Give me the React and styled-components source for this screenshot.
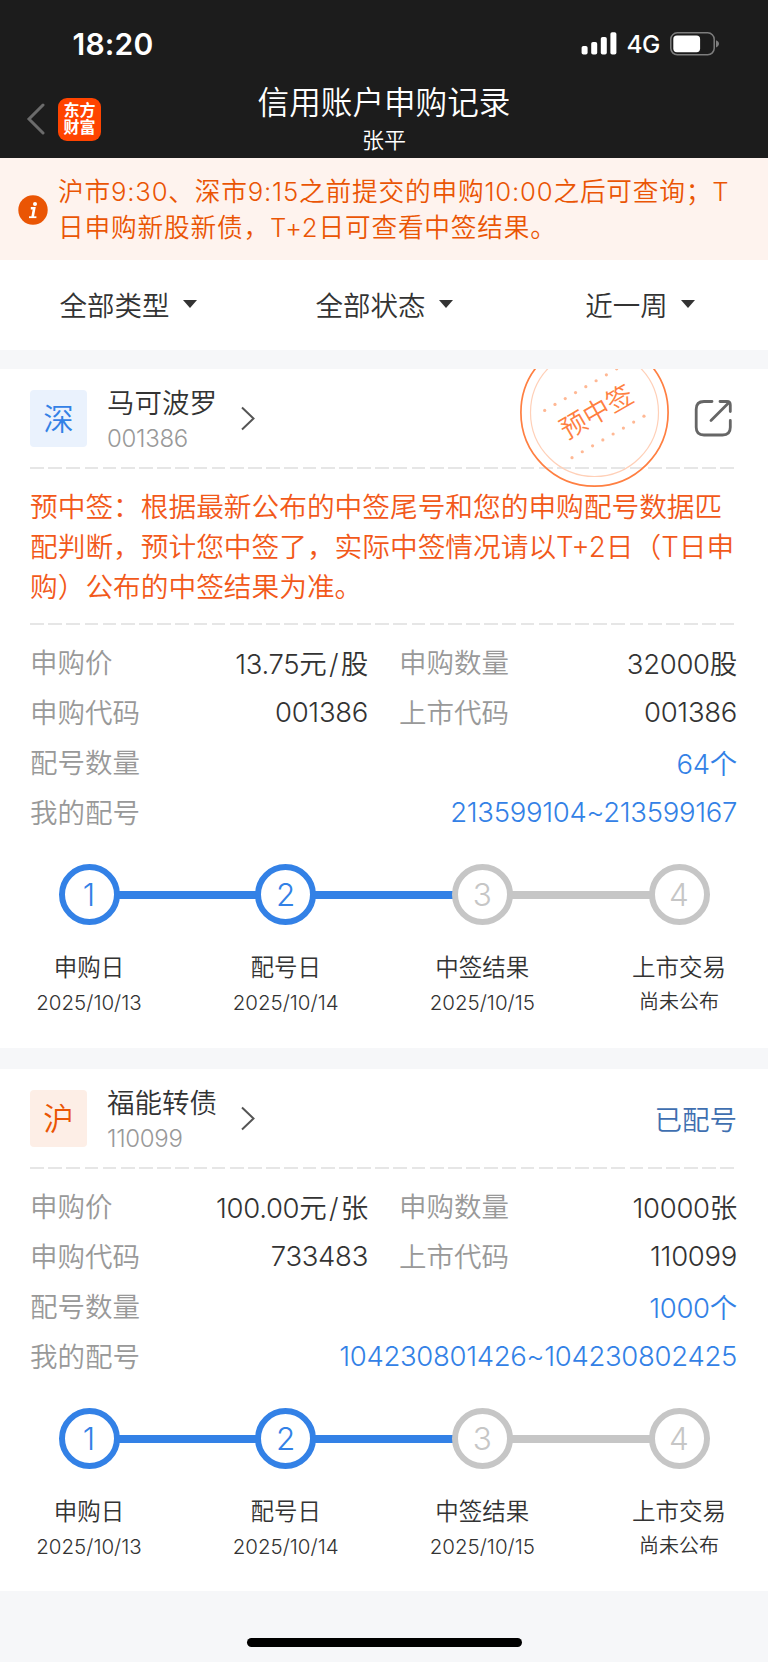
import React from 'react'
import styled, { createGlobalStyle } from 'styled-components'

const GlobalStyle = createGlobalStyle`
    body {
        margin: 0;
        background: #f6f7f9;
    }

    * {
        box-sizing: border-box;
    }
`;

const Page = styled.div`
    display: flex;
    flex-direction: column;
    width: 768px;
    height: 1662px;
    overflow: hidden;
    background: #f6f7f9;
    color: #333;
    font-family: Inter, "Noto Sans CJK SC", sans-serif;
    font-size: 27.5px;
    font-weight: 350;
    white-space: nowrap;
`;

const Header = styled.header`
    height: 158px;
    flex: none;
    background: #1c1c1c;
    color: #fff;
`;

const StatusBar = styled.div`
    display: flex;
    align-items: center;
    justify-content: space-between;
    height: 87px;
    padding: 0 49px 0 72.5px;
`;

const Clock = styled.span`
    font-size: 30px;
    font-weight: 600;
    letter-spacing: 0.2px;
`;

const Signals = styled.div`
    display: flex;
    align-items: center;

    span {
        margin: 0 10px 0 9px;
        font-size: 24.5px;
        font-weight: 450;
        letter-spacing: -0.4px;
    }
`;

const NavBar = styled.div`
    display: grid;
    grid-template-columns: 200px 1fr 200px;
    height: 71px;
`;

const NavLeft = styled.div`
    display: flex;
    align-items: center;
    gap: 13px;
    height: 64px;
    padding-left: 26px;
`;

const Logo = styled.div`
    width: 43px;
    height: 43px;
    padding-top: 4px;
    border-radius: 9px;
    background: #ff4400;
    font-size: 16px;
    font-weight: 700;
    line-height: 17.7px;
    text-align: center;
`;

const Title = styled.div`
    text-align: center;

    h1 {
        margin: 0;
        font-size: 31.6px;
        font-weight: 350;
        line-height: 32px;
    }

    p {
        margin: 8px 0 0;
        font-size: 22px;
        line-height: 26px;
    }
`;

const Banner = styled.div`
    display: flex;
    align-items: center;
    flex: none;
    height: 102px;
    padding: 1px 0 0 18px;
    background: #fef3ee;
    color: #ea5504;
    font-size: 25.7px;
    line-height: 36px;
    letter-spacing: 0.8px;

    p {
        margin: 0 0 0 10px;
    }
`;

const Filters = styled.div`
    display: flex;
    flex: none;
    height: 90px;
    padding-bottom: 2px;
    background: #fff;
`;

const Filter = styled.div`
    display: flex;
    flex: 1;
    align-items: center;
    justify-content: center;
    gap: 13px;
`;

const Card = styled.section`
    position: relative;
    flex: none;
    height: ${props => props.$height}px;
    margin-top: ${props => props.$gap}px;
    padding: 0 30px;
    overflow: hidden;
    background: #fff;
`;

const CardHead = styled.div`
    display: flex;
    align-items: center;
    height: 98px;
`;

const Market = styled.div`
    width: 57px;
    height: 57px;
    border-radius: 4px;
    background: ${props => props.$bg};
    color: ${props => props.$color};
    font-size: 30.5px;
    line-height: 57px;
    text-align: center;
`;

const Stock = styled.div`
    margin: 0 24px 0 20px;
    padding-top: 4px;

    h2 {
        margin: 0;
        font-size: 27.5px;
        font-weight: 350;
        line-height: 36px;
    }

    p {
        margin: 0;
        color: #999;
        font-size: 24px;
        line-height: 35px;
        letter-spacing: -0.3px;
    }
`;

const HeadRight = styled.div`
    display: flex;
    margin-left: auto;
    margin-right: 5px;
`;

const Allotted = styled.span`
    margin-right: -4px;
    color: #3f6fb0;
`;

const Stamp = styled.svg`
    position: absolute;
    top: -32px;
    left: 519px;
`;

const Dash = styled.div`
    width: 705px;
    height: 2px;
    background: repeating-linear-gradient(90deg, #e6e6e6 0 13.8px, transparent 13.8px 18.17px);
`;

const Notice = styled.p`
    margin: 0;
    padding: 18px 0;
    height: 154px;
    color: #f2591a;
    font-size: 27.7px;
    line-height: 40px;
`;

const Fields = styled.div`
    display: grid;
    grid-template-columns: 338px 338px;
    column-gap: 31px;
    grid-auto-rows: 50px;
    margin-right: -6px;
    padding-top: 12px;
`;

const Field = styled.div`
    display: flex;
    align-items: center;
    justify-content: space-between;
    grid-column: ${props => (props.$wide ? 'span 2' : 'auto')};
    color: ${props => (props.$wide ? '#3381e6' : '#333')};
    letter-spacing: -0.3px;

    label {
        padding-bottom: 2px;
        color: #999;
        letter-spacing: 0;
    }
`;

const Slash = styled.i`
    padding: 0 2.5px;
    font-style: normal;
`;

const Track = styled.div`
    display: flex;
    align-items: center;
    margin-top: 27px;
    padding: 0 28.5px;
`;

const Circle = styled.div`
    flex: none;
    width: 61px;
    height: 61px;
    border: 6px solid ${props => (props.$done ? '#3381e6' : '#c6c6c6')};
    border-radius: 50%;
    color: ${props => (props.$done ? '#3381e6' : '#c6c6c6')};
    font-size: 31.5px;
    font-weight: 300;
    line-height: 49px;
    text-align: center;
`;

const Connector = styled.div`
    flex: 1;
    height: 8px;
    margin: 0 -1px;
    background: ${props => (props.$done ? '#3381e6' : '#c6c6c6')};
`;

const Captions = styled.div`
    display: flex;
    justify-content: space-between;
    margin-top: 25px;
`;

const Caption = styled.div`
    width: 118px;
    text-align: center;
    font-size: 23.5px;
    line-height: 35px;

    small {
        display: block;
        font-size: ${props => (props.$pending ? 20 : 20.5)}px;
    }
`;

const HomeIndicator = styled.div`
    flex: none;
    width: 275px;
    height: 9px;
    margin: 47px auto 0;
    border-radius: 5px;
    background: #000;
`;

const steps = [
    { label: '申购日', date: '2025/10/13', done: true },
    { label: '配号日', date: '2025/10/14', done: true },
    { label: '中签结果', date: '2025/10/15', done: false },
    { label: '上市交易', date: '尚未公布', done: false },
]

const dots = [0, 1, 2, 3, 4, 5, 6, 7]

const FilterItem = ({ children }) => (
    <Filter>
        <span>{children}</span>
        <svg width="14" height="8" viewBox="0 0 14 8">
            <path d="M0 0H14L7 8Z" fill="#333" />
        </svg>
    </Filter>
)

const WinStamp = () => (
    <Stamp width="152" height="152" viewBox="0 0 152 152" fill="none">
        <circle cx="75.5" cy="75.5" r="73.6" stroke="#ff7f41" strokeWidth="1.7" />
        <circle cx="75.5" cy="75.5" r="64" stroke="#ffd0b8" strokeWidth="1.2" />
        {dots.map(i => (
            <g key={i} fill="#ffb894">
                <circle cx={25.7 + i * 10.28} cy={73.4 - i * 5.93} r="1.6" />
                <circle cx={53 + i * 10.28} cy={120.7 - i * 5.93} r="1.6" />
            </g>
        ))}
        <text
            transform="translate(77.5 75) rotate(-30)"
            y="9.5"
            textAnchor="middle"
            fontSize="26.5"
            fill="#ff7f41"
        >
            预中签
        </text>
    </Stamp>
)

const Progress = () => (
    <>
        <Track>
            {steps.map((step, i) => (
                <React.Fragment key={step.label}>
                    {i > 0 && <Connector $done={steps[i - 1].done} />}
                    <Circle $done={step.done}>{i + 1}</Circle>
                </React.Fragment>
            ))}
        </Track>
        <Captions>
            {steps.map(step => (
                <Caption key={step.label} $pending={step.date === '尚未公布'}>
                    {step.label}
                    <small>{step.date}</small>
                </Caption>
            ))}
        </Captions>
    </>
)

const StockTitle = ({ market, bg, color, name, code }) => (
    <>
        <Market $bg={bg} $color={color}>{market}</Market>
        <Stock>
            <h2>{name}</h2>
            <p>{code}</p>
        </Stock>
        <svg width="15" height="26" viewBox="0 0 15 26" fill="none">
            <path d="M1 2.5L12.5 13.5L1 24.5" stroke="#555" strokeWidth="2" />
        </svg>
    </>
)

const Details = ({ price, unit, amount, code, listCode, count, numbers }) => (
    <Fields>
        <Field>
            <label>申购价</label>
            <span>{price}元<Slash>/</Slash>{unit}</span>
        </Field>
        <Field><label>申购数量</label>{amount}{unit}</Field>
        <Field><label>申购代码</label>{code}</Field>
        <Field><label>上市代码</label>{listCode}</Field>
        <Field $wide><label>配号数量</label>{count}</Field>
        <Field $wide><label>我的配号</label>{numbers}</Field>
    </Fields>
)

const App = () => {
    return (
        <Page>
            <GlobalStyle />
            <Header>
                <StatusBar>
                    <Clock>18:20</Clock>
                    <Signals>
                        <svg width="36" height="23" viewBox="0 0 36 23" fill="#fff">
                            <rect x="0.6" y="14" width="6" height="8.5" rx="1.8" />
                            <rect x="10.2" y="10" width="6" height="12.5" rx="1.8" />
                            <rect x="19.8" y="5" width="6" height="17.5" rx="1.8" />
                            <rect x="29.4" y="0.3" width="6" height="22.2" rx="1.8" />
                        </svg>
                        <span>4G</span>
                        <svg width="49" height="24" viewBox="0 0 49 24" fill="none">
                            <rect x="0.8" y="0.8" width="43.4" height="22" rx="6.5" stroke="#7d7d7d" strokeWidth="1.5" />
                            <rect x="3.3" y="3.4" width="26.8" height="16.8" rx="3.6" fill="#fff" />
                            <path d="M46 8.2C48 9 49 10.3 49 11.8S48 14.6 46 15.4Z" fill="#7d7d7d" />
                        </svg>
                    </Signals>
                </StatusBar>
                <NavBar>
                    <NavLeft>
                        <svg width="19" height="32" viewBox="0 0 19 32" fill="none">
                            <path d="M17 2L3 16L17 30" stroke="#6b6b6b" strokeWidth="3" strokeLinecap="round" />
                        </svg>
                        <Logo>东方<br />财富</Logo>
                    </NavLeft>
                    <Title>
                        <h1>信用账户申购记录</h1>
                        <p>张平</p>
                    </Title>
                </NavBar>
            </Header>
            <Banner>
                <svg width="30" height="30" viewBox="0 0 30 30" fill="none">
                    <circle cx="15" cy="15" r="14.7" fill="#ea5504" />
                    <circle cx="17" cy="9" r="2" fill="#fff" />
                    <path d="M12.8 13.2H16.2L14.6 22" stroke="#fff" strokeWidth="2.6" />
                    <path d="M11 22.2H18.4" stroke="#fff" strokeWidth="1.8" />
                </svg>
                <p>
                    沪市9:30、深市9:15之前提交的申购10:00之后可查询；T<br />
                    日申购新股新债，T+2日可查看中签结果。
                </p>
            </Banner>
            <Filters>
                <FilterItem>全部类型</FilterItem>
                <FilterItem>全部状态</FilterItem>
                <FilterItem>近一周</FilterItem>
            </Filters>
            <Card $height={679} $gap={19}>
                <CardHead>
                    <StockTitle market="深" bg="#eaf2fd" color="#3381e6" name="马可波罗" code="001386" />
                    <HeadRight>
                        <svg width="39" height="39" viewBox="0 0 39 39" fill="none" stroke="#666" strokeWidth="2.8" strokeLinecap="round" strokeLinejoin="round">
                            <path d="M18 2.5H10Q2.2 2.5 2.2 10.3V28.2Q2.2 36 10 36H28.5Q36.3 36 36.3 28.2V21.5" />
                            <path d="M26 2.5H33Q36.3 2.5 36.3 6V12.5" />
                            <path d="M34.5 4L17 21.5" />
                        </svg>
                    </HeadRight>
                </CardHead>
                <Dash />
                <Notice>
                    预中签：根据最新公布的中签尾号和您的申购配号数据匹<br />
                    配判断，预计您中签了，实际中签情况请以T+2日（T日申<br />
                    购）公布的中签结果为准。
                </Notice>
                <Dash />
                <Details
                    price="13.75"
                    unit="股"
                    amount="32000"
                    code="001386"
                    listCode="001386"
                    count="64个"
                    numbers="213599104~213599167"
                />
                <Progress />
                <WinStamp />
            </Card>
            <Card $height={522} $gap={21}>
                <CardHead>
                    <StockTitle market="沪" bg="#fdeee6" color="#ea5504" name="福能转债" code="110099" />
                    <HeadRight><Allotted>已配号</Allotted></HeadRight>
                </CardHead>
                <Dash />
                <Details
                    price="100.00"
                    unit="张"
                    amount="10000"
                    code="733483"
                    listCode="110099"
                    count="1000个"
                    numbers="104230801426~104230802425"
                />
                <Progress />
            </Card>
            <HomeIndicator />
        </Page>
    )
}

export default App
